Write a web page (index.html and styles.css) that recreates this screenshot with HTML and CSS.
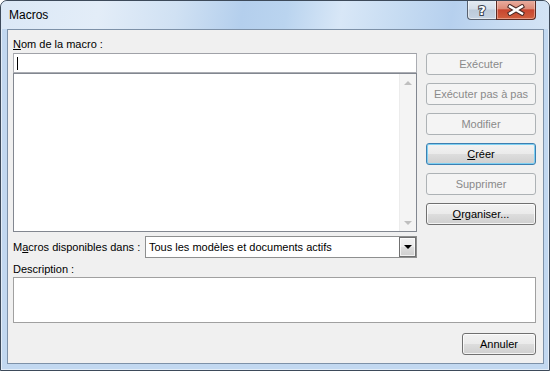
FILE: index.html
```html
<!DOCTYPE html>
<html lang="fr">
<head>
<meta charset="utf-8">
<title>Macros</title>
<link rel="stylesheet" href="styles.css">
</head>
<body>
<div class="window">
  <div class="titlebar">
    <span class="title">Macros</span>
    <div class="caption-btns">
      <div class="cap help">
        <svg width="14" height="15" viewBox="0 0 14 15"><text x="7" y="12.5" text-anchor="middle" class="qmark">?</text></svg>
      </div>
      <div class="cap close">
        <svg width="18" height="12" viewBox="0 0 18 12"><path d="M3 2.5 L15 9.5 M15 2.5 L3 9.5" class="x-out"/><path d="M3 2.5 L15 9.5 M15 2.5 L3 9.5" class="x-in"/></svg>
      </div>
    </div>
  </div>
  <div class="client">
    <div class="top-row">
      <div class="left-col">
        <div class="label"><u>N</u>om de la macro :</div>
        <div class="name-input"><span class="caret"></span></div>
        <div class="listbox">
          <div class="scrollbar">
            <span class="arrow-up"></span>
            <span class="arrow-down"></span>
          </div>
        </div>
      </div>
      <div class="right-col">
        <div class="btn disabled">Exécuter</div>
        <div class="btn disabled">Exécuter pas à pas</div>
        <div class="btn disabled">Modifier</div>
        <div class="btn default"><span><u>C</u>réer</span></div>
        <div class="btn disabled">Supprimer</div>
        <div class="btn"><span><u>O</u>rganiser...</span></div>
      </div>
    </div>
    <div class="select-row">
      <div class="select-label">M<u>a</u>cros disponibles dans :</div>
      <div class="select">
        <span class="select-text">Tous les modèles et documents actifs</span>
        <span class="drop-btn"><span class="drop-arrow"></span></span>
      </div>
    </div>
    <div class="label desc-label">Description :</div>
    <div class="desc-box"></div>
    <div class="bottom-row">
      <div class="btn cancel">Annuler</div>
    </div>
  </div>
</div>
</body>
</html>
```
FILE: styles.css
```css
html, body {
  margin: 0;
  padding: 0;
  background: #ffffff;
}
body {
  font-family: "Liberation Sans", Tahoma, Arial, sans-serif;
  font-size: 11px;
  color: #000;
}
.window {
  width: 550px;
  height: 371px;
  box-sizing: border-box;
  border: 1px solid #3d4a5a;
  border-radius: 7px 7px 0 0;
  background: #c2d8f0;
  box-shadow: inset 0 0 0 1px rgba(255,255,255,0.55);
  display: flex;
  flex-direction: column;
  overflow: hidden;
}
.titlebar {
  height: 28px;
  flex: none;
  display: flex;
  justify-content: space-between;
  align-items: flex-start;
  padding-left: 8px;
  padding-right: 13px;
  background: linear-gradient(100deg, #dbe8f6 0%, #e3edf8 18%, #d0e1f3 32%, #b4cfed 44%, #bad4ef 52%, #d8e7f7 62%, #c7dcf2 72%, #b6d0ee 82%, #c9ddf3 92%, #d4e4f5 100%);
  border-radius: 6px 6px 0 0;
}
.title {
  font-family: "Liberation Sans", "Segoe UI", sans-serif;
  font-size: 12px;
  line-height: 14px;
  margin-top: 7px;
  color: #000;
}
.caption-btns {
  display: flex;
  margin-top: -1px;
}
.cap {
  height: 20px;
  box-sizing: border-box;
  display: flex;
  align-items: center;
  justify-content: center;
  border: 1px solid #57606e;
  border-top: none;
}
.help {
  width: 29px;
  border-right: none;
  border-radius: 0 0 0 4px;
  background: linear-gradient(#e6ecf3 0%, #d5dee9 48%, #bccad9 52%, #c6d3e2 100%);
  box-shadow: inset 0 0 0 1px rgba(255,255,255,0.5);
}
.close {
  width: 40px;
  border-radius: 0 0 4px 0;
  border-color: #5a2a22;
  background: linear-gradient(#eab0a3 0%, #dc8b78 46%, #c8452f 52%, #d0603f 100%);
  box-shadow: inset 0 0 0 1px rgba(255,220,210,0.45);
}
.qmark {
  font-family: "DejaVu Sans", sans-serif;
  font-weight: bold;
  font-size: 13px;
  fill: #ffffff;
  stroke: #3b4350;
  stroke-width: 2px;
  paint-order: stroke;
}
.x-out {
  stroke: #4a2a26;
  stroke-width: 4.5;
  stroke-linecap: square;
  fill: none;
}
.x-in {
  stroke: #ffffff;
  stroke-width: 2.4;
  stroke-linecap: square;
  fill: none;
}
.client {
  flex: 1;
  margin: 0 5px 6px 6px;
  border: 1px solid #7d91a8;
  background: #f0f0f0;
  padding: 8px 7px 8px 5px;
  display: flex;
  flex-direction: column;
}
.top-row {
  display: flex;
  gap: 9px;
}
.left-col {
  width: 404px;
  display: flex;
  flex-direction: column;
}
.label {
  height: 13px;
  line-height: 13px;
  white-space: nowrap;
}
.left-col .label {
  margin-bottom: 2px;
}
.name-input {
  height: 20px;
  box-sizing: border-box;
  border: 1px solid #abadb3;
  border-top-color: #a0a2a8;
  background: #fff;
  display: flex;
  align-items: center;
  padding-left: 3px;
}
.caret {
  width: 1px;
  height: 13px;
  background: #000;
}
.listbox {
  height: 159px;
  box-sizing: border-box;
  border: 1px solid #828790;
  background: #fff;
  display: flex;
  justify-content: flex-end;
}
.scrollbar {
  width: 17px;
  background: #f4f4f4;
  border-left: 1px solid #ececec;
  box-sizing: border-box;
  display: flex;
  flex-direction: column;
  justify-content: space-between;
  align-items: center;
  padding: 7px 0 6px;
}
.arrow-up {
  width: 0;
  height: 0;
  border-left: 4px solid transparent;
  border-right: 4px solid transparent;
  border-bottom: 4px solid #bfbfbf;
}
.arrow-down {
  width: 0;
  height: 0;
  border-left: 4px solid transparent;
  border-right: 4px solid transparent;
  border-top: 4px solid #bfbfbf;
}
.right-col {
  width: 110px;
  padding-top: 15px;
  display: flex;
  flex-direction: column;
  gap: 8px;
}
.btn {
  height: 22px;
  box-sizing: border-box;
  border: 1px solid #707070;
  border-radius: 3px;
  background: linear-gradient(#f2f2f2 0%, #ebebeb 48%, #dddddd 52%, #cfcfcf 100%);
  box-shadow: inset 0 0 0 1px rgba(255,255,255,0.75);
  display: flex;
  align-items: center;
  justify-content: center;
  white-space: nowrap;
  line-height: 13px;
  color: #000;
}
.btn.disabled {
  border-color: #adb2b5;
  background: #f4f4f4;
  box-shadow: none;
  color: #8a8a8a;
}
.btn.default {
  border-color: #3c7fb1;
  box-shadow: inset 0 0 0 1px #7fd0f2;
}
.select-row {
  margin-top: 4px;
  height: 22px;
  display: flex;
  align-items: center;
}
.select-label {
  width: 132px;
  white-space: nowrap;
  line-height: 13px;
}
.select {
  width: 272px;
  height: 22px;
  box-sizing: border-box;
  border: 1px solid #8e8f8f;
  background: #fff;
  display: flex;
  align-items: center;
}
.select-text {
  flex: 1;
  padding-left: 3px;
  white-space: nowrap;
}
.drop-btn {
  width: 17px;
  height: 20px;
  box-sizing: border-box;
  border: 1px solid #707070;
  background: linear-gradient(#f2f2f2 0%, #ebebeb 48%, #dddddd 52%, #cfcfcf 100%);
  box-shadow: inset 0 0 0 1px rgba(255,255,255,0.7);
  display: flex;
  align-items: center;
  justify-content: center;
}
.drop-arrow {
  width: 0;
  height: 0;
  border-left: 4px solid transparent;
  border-right: 4px solid transparent;
  border-top: 4px solid #000;
}
.desc-label {
  margin-top: 5px;
  margin-bottom: 1px;
}
.desc-box {
  height: 46px;
  box-sizing: border-box;
  border: 1px solid #a0a0a0;
  background: #fff;
}
.bottom-row {
  margin-top: 10px;
  display: flex;
  justify-content: flex-end;
}
.cancel {
  width: 74px;
}
```
